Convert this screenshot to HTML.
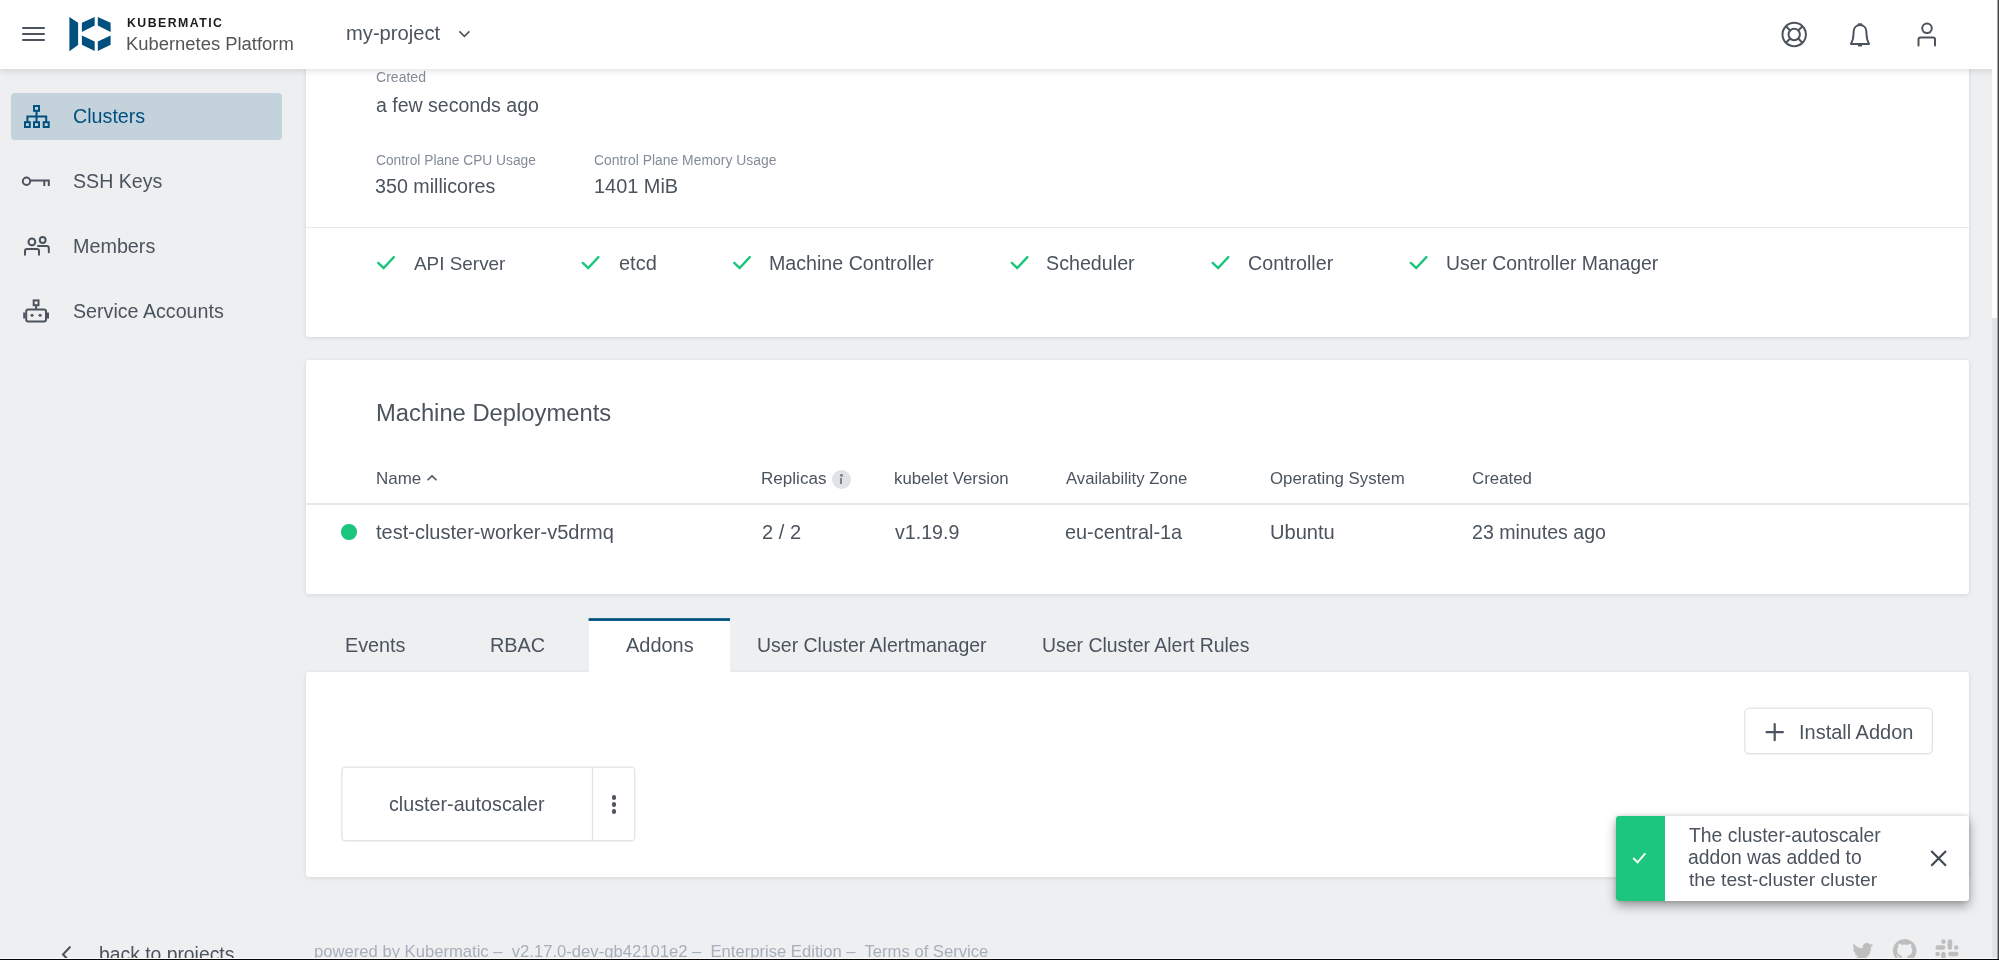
<!DOCTYPE html>
<html><head><meta charset="utf-8"><title>Kubermatic</title>
<style>
html,body{margin:0;padding:0;}
body{width:1999px;height:960px;overflow:hidden;position:relative;background:#edeff1;font-family:"Liberation Sans",sans-serif;}
.a{position:absolute;}
.t{position:absolute;white-space:nowrap;will-change:transform;}
.card{position:absolute;background:#fff;border-radius:3px;box-shadow:0 1px 4px rgba(0,0,0,.11);}
svg{overflow:visible;display:block}

</style></head><body>
<div class="a" style="left:0;top:0;width:1999px;height:960px;background:#edeff1"></div>
<div class="card" style="left:305.5px;top:40px;width:1663px;height:296.5px"></div>
<div class="a" style="left:305.5px;top:226.5px;width:1663px;height:1.5px;background:#e6e9eb"></div>
<div class="card" style="left:305.5px;top:360px;width:1663px;height:234px"></div>
<div class="a" style="left:305.5px;top:503px;width:1663px;height:1.5px;background:#e3e7e9"></div>
<div class="card" style="left:305.5px;top:671.5px;width:1663px;height:205.5px"></div>
<div class="a" style="left:588.5px;top:618.3px;width:141.5px;height:56px;background:#fff"></div>
<svg class="a" style="left:0;top:0" width="1" height="1"><rect x="588.6" y="618.15" width="141.4" height="2.75" fill="#00507f"/></svg>
<div class="t" style="left:376.00px;top:67px;line-height:20px;font-size:14.05px;color:#838c98;">Created</div>
<div class="t" style="left:376.00px;top:92px;line-height:26px;font-size:19.54px;color:#4b545e;">a few seconds ago</div>
<div class="t" style="left:376.00px;top:151px;line-height:19px;font-size:13.78px;color:#838c98;">Control Plane CPU Usage</div>
<div class="t" style="left:594.00px;top:150px;line-height:20px;font-size:13.91px;color:#838c98;">Control Plane Memory Usage</div>
<div class="t" style="left:375.00px;top:173px;line-height:26px;font-size:19.68px;color:#4b545e;">350 millicores</div>
<div class="t" style="left:594.00px;top:173px;line-height:26px;font-size:19.93px;color:#4b545e;">1401 MiB</div>
<svg class="a" style="left:0;top:0" width="1" height="1"><path d="M378.20 262.90 L383.61 267.96 L393.80 257.10" fill="none" stroke="#1cc67f" stroke-width="2.4" stroke-linecap="round" stroke-linejoin="miter"/></svg>
<div class="t" style="left:414.00px;top:251px;line-height:25px;font-size:18.91px;color:#4b545e;">API Server</div>
<svg class="a" style="left:0;top:0" width="1" height="1"><path d="M582.80 262.90 L588.21 267.96 L598.40 257.10" fill="none" stroke="#1cc67f" stroke-width="2.4" stroke-linecap="round" stroke-linejoin="miter"/></svg>
<div class="t" style="left:619.00px;top:250px;line-height:26px;font-size:19.98px;color:#4b545e;">etcd</div>
<svg class="a" style="left:0;top:0" width="1" height="1"><path d="M734.20 262.90 L739.61 267.96 L749.80 257.10" fill="none" stroke="#1cc67f" stroke-width="2.4" stroke-linecap="round" stroke-linejoin="miter"/></svg>
<div class="t" style="left:769.00px;top:250px;line-height:26px;font-size:19.64px;color:#4b545e;">Machine Controller</div>
<svg class="a" style="left:0;top:0" width="1" height="1"><path d="M1011.80 262.90 L1017.21 267.96 L1027.40 257.10" fill="none" stroke="#1cc67f" stroke-width="2.4" stroke-linecap="round" stroke-linejoin="miter"/></svg>
<div class="t" style="left:1046.00px;top:250px;line-height:26px;font-size:19.70px;color:#4b545e;">Scheduler</div>
<svg class="a" style="left:0;top:0" width="1" height="1"><path d="M1212.70 262.90 L1218.11 267.96 L1228.30 257.10" fill="none" stroke="#1cc67f" stroke-width="2.4" stroke-linecap="round" stroke-linejoin="miter"/></svg>
<div class="t" style="left:1248.00px;top:250px;line-height:26px;font-size:19.67px;color:#4b545e;">Controller</div>
<svg class="a" style="left:0;top:0" width="1" height="1"><path d="M1410.80 262.90 L1416.21 267.96 L1426.40 257.10" fill="none" stroke="#1cc67f" stroke-width="2.4" stroke-linecap="round" stroke-linejoin="miter"/></svg>
<div class="t" style="left:1446.00px;top:250px;line-height:26px;font-size:19.40px;color:#4b545e;">User Controller Manager</div>
<div class="t" style="left:376.00px;top:397px;line-height:31px;font-size:23.78px;color:#4b545e;">Machine Deployments</div>
<div class="t" style="left:376.00px;top:467px;line-height:23px;font-size:16.98px;color:#4b545e;">Name</div>
<svg class="a" style="left:425px;top:472px" width="14" height="12" viewBox="0 0 14 12"><path d="M2.5 8.3 L7 3.9 L11.5 8.3" fill="none" stroke="#4b545e" stroke-width="1.5"/></svg>
<div class="t" style="left:761.00px;top:467px;line-height:23px;font-size:17.09px;color:#4b545e;">Replicas</div>
<div class="a" style="left:831.7px;top:469.7px;width:19.3px;height:19.3px;border-radius:50%;background:#dfe3e7"></div>
<div class="a" style="left:839.8px;top:474.4px;width:2.8px;height:2.8px;background:#7a8390;border-radius:1.4px"></div>
<div class="a" style="left:839.9px;top:478px;width:2.6px;height:6.2px;background:#7a8390"></div>
<div class="t" style="left:894.00px;top:467px;line-height:23px;font-size:16.77px;color:#4b545e;">kubelet Version</div>
<div class="t" style="left:1066.00px;top:467px;line-height:23px;font-size:16.69px;color:#4b545e;">Availability Zone</div>
<div class="t" style="left:1270.00px;top:467px;line-height:23px;font-size:16.84px;color:#4b545e;">Operating System</div>
<div class="t" style="left:1472.00px;top:467px;line-height:23px;font-size:16.85px;color:#4b545e;">Created</div>
<div class="a" style="left:341.3px;top:524.3px;width:15.4px;height:15.4px;border-radius:50%;background:#1cc67f"></div>
<div class="t" style="left:376.00px;top:519px;line-height:26px;font-size:20.00px;color:#4b545e;">test-cluster-worker-v5drmq</div>
<div class="t" style="left:762.00px;top:519px;line-height:26px;font-size:20.08px;color:#4b545e;">2 / 2</div>
<div class="t" style="left:895.00px;top:519px;line-height:26px;font-size:19.61px;color:#4b545e;">v1.19.9</div>
<div class="t" style="left:1065.00px;top:519px;line-height:26px;font-size:19.89px;color:#4b545e;">eu-central-1a</div>
<div class="t" style="left:1270.00px;top:519px;line-height:26px;font-size:20.08px;color:#4b545e;">Ubuntu</div>
<div class="t" style="left:1472.00px;top:519px;line-height:26px;font-size:19.60px;color:#4b545e;">23 minutes ago</div>
<div class="t" style="left:345.00px;top:632px;line-height:26px;font-size:19.81px;color:#4b545e;">Events</div>
<div class="t" style="left:490.00px;top:632px;line-height:26px;font-size:19.87px;color:#4b545e;">RBAC</div>
<div class="t" style="left:626.00px;top:632px;line-height:26px;font-size:19.96px;color:#4b545e;">Addons</div>
<div class="t" style="left:757.00px;top:632px;line-height:26px;font-size:19.49px;color:#4b545e;">User Cluster Alertmanager</div>
<div class="t" style="left:1042.00px;top:632px;line-height:26px;font-size:19.46px;color:#4b545e;">User Cluster Alert Rules</div>
<svg class="a" style="left:0;top:0" width="1" height="1"><rect x="341.85" y="767.15" width="292.9" height="73.6" rx="3.5" fill="#fff" stroke="#e0e4e8" stroke-width="1.3"/><path d="M592.5 767.2 V840.7" stroke="#e0e4e8" stroke-width="1.3"/></svg>
<div class="t" style="left:389.00px;top:791px;line-height:26px;font-size:19.73px;color:#4b545e;">cluster-autoscaler</div>
<div class="a" style="left:611.8px;top:795.0px;width:4.6px;height:4.6px;border-radius:50%;background:#4b545e"></div>
<div class="a" style="left:611.8px;top:802.2px;width:4.6px;height:4.6px;border-radius:50%;background:#4b545e"></div>
<div class="a" style="left:611.8px;top:809.4000000000001px;width:4.6px;height:4.6px;border-radius:50%;background:#4b545e"></div>
<svg class="a" style="left:0;top:0" width="1" height="1"><rect x="1744.85" y="708.05" width="187.5" height="45.7" rx="4.5" fill="#fff" stroke="#e0e4e8" stroke-width="1.3"/></svg>
<svg class="a" style="left:1764px;top:722px" width="22" height="22" viewBox="0 0 22 22"><path d="M2.6 10.2 H18.8 M10.7 2.2 V18.2" stroke="#4b545e" stroke-width="2.2" stroke-linecap="round" fill="none"/></svg>
<div class="t" style="left:1799.00px;top:719px;line-height:26px;font-size:19.98px;color:#4b545e;">Install Addon</div>
<div class="t" style="left:99.00px;top:941px;line-height:26px;font-size:19.34px;color:#4b545e;">back to projects</div>
<svg class="a" style="left:0;top:0" width="1" height="1"><path d="M69.8 947.2 L63.1 954.4 L69.8 961.6" fill="none" stroke="#4b545e" stroke-width="2.1" stroke-linecap="round"/></svg>
<div class="t" style="left:314.00px;top:940px;line-height:23px;font-size:16.64px;color:#a7afba;">powered by Kubermatic –&nbsp; v2.17.0-dev-gb42101e2 –&nbsp; Enterprise Edition –&nbsp; Terms of Service</div>
<div class="a" style="left:10.5px;top:93px;width:271.5px;height:47px;border-radius:4px;background:#c4d2db"></div>
<div class="t" style="left:73.00px;top:103px;line-height:26px;font-size:19.72px;color:#00507f;">Clusters</div>
<div class="t" style="left:73.00px;top:168px;line-height:26px;font-size:19.60px;color:#4b545e;">SSH Keys</div>
<div class="t" style="left:73.00px;top:233px;line-height:26px;font-size:19.76px;color:#4b545e;">Members</div>
<div class="t" style="left:73.00px;top:298px;line-height:26px;font-size:19.66px;color:#4b545e;">Service Accounts</div>
<svg class="a" style="left:20px;top:100px" width="34" height="34" viewBox="20 100 34 34" fill="none" stroke="#00507f" stroke-width="2">
<rect x="34" y="106" width="5" height="4.8"/><rect x="25" y="122.2" width="4.8" height="4.8"/><rect x="34" y="122.2" width="5" height="4.8"/><rect x="43.7" y="122.2" width="5" height="4.8"/>
<path d="M36.5 111 V122 M27.4 122 V116.4 H46.2 V122"/></svg>
<svg class="a" style="left:20px;top:170px" width="34" height="24" viewBox="20 170 34 24" fill="none" stroke="#4b545e" stroke-width="2">
<circle cx="26.5" cy="181.2" r="3.7"/><path d="M30.4 180.6 H49.8 M44.3 180.6 V186 M48.8 180.6 V186"/></svg>
<svg class="a" style="left:20px;top:230px" width="34" height="30" viewBox="20 230 34 30" fill="none" stroke="#4b545e" stroke-width="2" stroke-linecap="round">
<circle cx="31.9" cy="241.9" r="3.4"/><circle cx="42.7" cy="240" r="2.9"/>
<path d="M25 254.8 V251 Q25 249 27 249 H37 Q39 249 39 251 V254.8"/><path d="M38 246 H46.8 Q48.8 246 48.8 248 V252.3"/></svg>
<svg class="a" style="left:20px;top:295px" width="34" height="32" viewBox="20 295 34 32" fill="none" stroke="#4b545e" stroke-width="2">
<rect x="33.7" y="300.4" width="4.8" height="4.8"/><path d="M36.1 305.2 V309.5"/><rect x="26.2" y="309.5" width="19.8" height="12" rx="2"/>
<path d="M24.2 312.5 V318.5 M48 312.5 V318.5"/><circle cx="32" cy="315.3" r="1.5" fill="#4b545e" stroke="none"/><circle cx="40.1" cy="315.3" r="1.5" fill="#4b545e" stroke="none"/></svg>
<div class="a" style="left:0;top:0;width:1999px;height:69px;background:#fff;box-shadow:0 1px 8px rgba(0,0,0,.15)"></div>
<div class="a" style="left:22.2px;top:27.05px;width:23px;height:2.1px;border-radius:1px;background:#4b545e"></div>
<div class="a" style="left:22.2px;top:32.85px;width:23px;height:2.1px;border-radius:1px;background:#4b545e"></div>
<div class="a" style="left:22.2px;top:38.75px;width:23px;height:2.1px;border-radius:1px;background:#4b545e"></div>
<svg class="a" style="left:68px;top:15px" width="45" height="38" viewBox="68 15 45 38" fill="#00507f">
<polygon points="69.4,16.9 78.1,22.8 78.1,45 69.4,51.2"/>
<polygon points="81.9,22.8 94.7,16.9 94.7,25.6 81.9,31.9"/>
<polygon points="97.8,16.9 110.6,22.8 110.6,31.9 97.8,25.6"/>
<polygon points="81.9,35.6 94.7,41.6 94.7,50.9 81.9,44.7"/>
<polygon points="97.8,41.6 110.6,35.6 110.6,44.7 97.8,50.9"/></svg>
<div class="t" style="left:127.00px;top:14px;line-height:18px;font-size:12.30px;color:#1c1c1c;font-weight:bold;letter-spacing:1.47px;">KUBERMATIC</div>
<div class="t" style="left:126.00px;top:31px;line-height:25px;font-size:18.41px;color:#555;">Kubernetes Platform</div>
<div class="t" style="left:346.00px;top:20px;line-height:26px;font-size:20.18px;color:#4b545e;">my-project</div>
<svg class="a" style="left:455px;top:27px" width="18" height="14" viewBox="0 0 18 14"><path d="M4.4 4.4 L9.4 9.3 L14.4 4.4" fill="none" stroke="#4b545e" stroke-width="1.6"/></svg>
<svg class="a" style="left:1778px;top:18px" width="32" height="32" viewBox="1778 18 32 32" fill="none" stroke="#4b545e" stroke-width="2">
<circle cx="1794.2" cy="34.5" r="11.7"/><circle cx="1794.2" cy="34.5" r="5.7"/>
<path d="M1786 26.3 L1790.2 30.5 M1802.4 26.3 L1798.2 30.5 M1786 42.7 L1790.2 38.5 M1802.4 42.7 L1798.2 38.5"/></svg>
<svg class="a" style="left:1846px;top:20px" width="28" height="30" viewBox="1846 20 28 30" fill="none" stroke="#4b545e" stroke-width="2" stroke-linejoin="round">
<path d="M1851 43.9 C1853.9 38.6 1853.6 35 1853.6 32.2 C1853.6 27.7 1856.5 25 1860 25 C1863.5 25 1866.4 27.7 1866.4 32.2 C1866.4 35 1866.1 38.6 1869 43.9 Z"/>
<path d="M1858.8 24.2 H1861.2 M1858.8 45.6 H1861.2" stroke-linecap="round"/></svg>
<svg class="a" style="left:1914px;top:20px" width="26" height="30" viewBox="1914 20 26 30" fill="none" stroke="#4b545e" stroke-width="2" stroke-linecap="round">
<circle cx="1927" cy="28.3" r="4.8"/><path d="M1918.5 45.6 V39.5 Q1918.5 37.5 1920.5 37.5 H1933 Q1935 37.5 1935 39.5 V45.6"/></svg>
<svg class="a" style="left:0;top:0" width="1" height="1" fill="#bebebe">
<g transform="translate(0.6 2.2) translate(1850 936) scale(1.06) translate(-1850 -936)"><path d="M1871.5 942.5 c-0.9 0.4 -1.7 0.6 -2.3 0.7 c0.9 -0.6 1.5 -1.3 1.8 -2.3 c-0.8 0.5 -1.7 0.8 -2.7 1 c-0.8 -0.8 -1.9 -1.3 -3 -1.3 c-2.6 0 -4.5 2.4 -3.9 4.9 c-3.4 -0.2 -6.4 -1.8 -8.4 -4.3 c-1.1 1.9 -0.5 4.2 1.2 5.4 c-0.7 0 -1.3 -0.2 -1.8 -0.5 c0 1.9 1.3 3.7 3.2 4.1 c-0.6 0.2 -1.2 0.2 -1.8 0.1 c0.5 1.6 2 2.8 3.8 2.8 c-1.7 1.3 -3.8 1.9 -5.9 1.7 c1.8 1.1 3.9 1.8 6.1 1.8 c7.5 0 11.7 -6.3 11.4 -12 c0.8 -0.6 1.5 -1.3 2 -2.1 z"/></g>
<g transform="translate(0.4 1)"><path d="M1904.2 938 a11.7 11.7 0 0 0 -3.7 22.8 c0.6 0.1 0.8 -0.3 0.8 -0.6 v-2.2 c-3.3 0.7 -3.9 -1.4 -3.9 -1.4 c-0.5 -1.4 -1.3 -1.7 -1.3 -1.7 c-1.1 -0.7 0.1 -0.7 0.1 -0.7 c1.2 0.1 1.8 1.2 1.8 1.2 c1 1.8 2.8 1.3 3.4 1 c0.1 -0.8 0.4 -1.3 0.8 -1.6 c-2.6 -0.3 -5.3 -1.3 -5.3 -5.8 c0 -1.3 0.5 -2.3 1.2 -3.1 c-0.1 -0.3 -0.5 -1.5 0.1 -3.1 c0 0 1 -0.3 3.2 1.2 a11 11 0 0 1 5.9 0 c2.2 -1.5 3.2 -1.2 3.2 -1.2 c0.6 1.6 0.2 2.8 0.1 3.1 c0.8 0.8 1.2 1.9 1.2 3.1 c0 4.5 -2.7 5.5 -5.3 5.8 c0.4 0.4 0.8 1.1 0.8 2.2 v3.2 c0 0.3 0.2 0.7 0.8 0.6 a11.7 11.7 0 0 0 -3.7 -22.8 z" fill-rule="evenodd"/></g>
<g><rect x="1947.6" y="939.2" width="4.6" height="10.5" rx="2.3"/><rect x="1935.4" y="945.3" width="9.9" height="4.5" rx="2.25"/>
<rect x="1948.1" y="951.7" width="10.4" height="4.5" rx="2.25"/><rect x="1941.1" y="951.7" width="4.5" height="10.5" rx="2.25"/>
<circle cx="1943.5" cy="941.6" r="2.3"/><circle cx="1956.2" cy="947.5" r="2.3"/><circle cx="1937.6" cy="954" r="2.3"/><circle cx="1950.1" cy="960" r="2.3"/></g>
</svg>
<div class="a" style="left:1615.5px;top:815.5px;width:353.5px;height:85px;background:#fff;border-radius:3px;box-shadow:0 5px 11px rgba(0,0,0,.36), 0 0 4px rgba(0,0,0,.14);overflow:hidden"><div style="position:absolute;left:0;top:0;width:49.5px;height:85px;background:#1cc67f"></div></div>
<svg class="a" style="left:0;top:0" width="1" height="1"><path d="M1633.75 858.50 L1637.57 862.42 L1644.85 853.95" fill="none" stroke="#fff" stroke-width="1.9" stroke-linecap="round" stroke-linejoin="miter"/></svg>
<div class="t" style="left:1689.00px;top:822px;line-height:26px;font-size:19.39px;color:#4b545e;">The cluster-autoscaler</div>
<div class="t" style="left:1688.00px;top:845px;line-height:25px;font-size:19.29px;color:#4b545e;">addon was added to</div>
<div class="t" style="left:1689.00px;top:867px;line-height:25px;font-size:19.24px;color:#4b545e;">the test-cluster cluster</div>
<svg class="a" style="left:1928px;top:848px" width="21" height="21" viewBox="1928 848 21 21"><path d="M1931.3 851 L1946 865.7 M1946 851 L1931.3 865.7" stroke="#3f4852" stroke-width="2.1" fill="none"/></svg>
<div class="a" style="left:1992px;top:0;width:7px;height:960px;background:#fff"></div>
<div class="a" style="left:1992px;top:318px;width:6px;height:642px;background:#e0e4e8"></div>
<div class="a" style="left:1997px;top:0;width:1px;height:960px;background:#a2a2a2"></div>
<div class="a" style="left:1998px;top:0;width:1px;height:960px;background:#464646"></div>
<div class="a" style="left:0;top:958px;width:1997px;height:1px;background:#fbfbfb"></div>
<div class="a" style="left:0;top:959px;width:1999px;height:1px;background:#050505"></div>
</body></html>
